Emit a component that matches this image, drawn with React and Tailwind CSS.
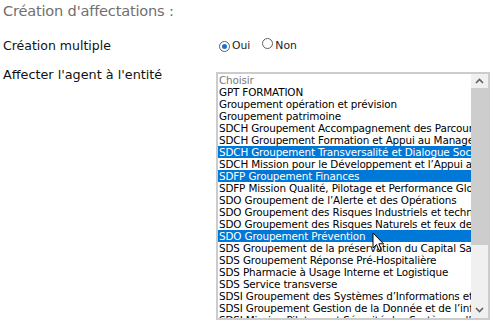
import React from "react";

const items = [
  { t: "Choisir", muted: true },
  { t: "GPT FORMATION" },
  { t: "Groupement opération et prévision" },
  { t: "Groupement patrimoine" },
  { t: "SDCH Groupement Accompagnement des Parcours Professionnels" },
  { t: "SDCH Groupement Formation et Appui au Management" },
  { t: "SDCH Groupement Transversalité et Dialogue Social", sel: true },
  { t: "SDCH Mission pour le Développement et l’Appui aux Compétences" },
  { t: "SDFP Groupement Finances", sel: true },
  { t: "SDFP Mission Qualité, Pilotage et Performance Globale" },
  { t: "SDO Groupement de l’Alerte et des Opérations" },
  { t: "SDO Groupement des Risques Industriels et technologiques" },
  { t: "SDO Groupement des Risques Naturels et feux de forêts" },
  { t: "SDO Groupement Prévention", sel: true },
  { t: "SDS Groupement de la préservation du Capital Santé" },
  { t: "SDS Groupement Réponse Pré-Hospitalière" },
  { t: "SDS Pharmacie à Usage Interne et Logistique" },
  { t: "SDS Service transverse" },
  { t: "SDSI Groupement des Systèmes d’Informations et de Communication" },
  { t: "SDSI Groupement Gestion de la Donnée et de l’information" },
  { t: "SDSI Mission Pilotage et Sécurité des Systèmes d’Information" },
];

function Radio({ checked }) {
  return (
    <span className="inline-flex w-[11px] h-[11px] rounded-full border border-[#5f5f5f] items-center justify-center bg-white box-border">
      {checked && <span className="w-[5px] h-[5px] rounded-full bg-[#1a6fd1]" />}
    </span>
  );
}

export default function App() {
  return (
    <div
      className="w-[502px] h-[331px] bg-white overflow-hidden relative text-[#1f1f1f]"
      style={{ fontFamily: "'DejaVu Sans', Verdana, sans-serif" }}
    >
      <div className="pl-[3px] pt-[2px] text-[14.6px] leading-[18px] text-[#707070] tracking-[-0.2px]">
        Création d'affectations :
      </div>

      <div className="flex mt-[19px] h-[14px] items-center">
        <div className="w-[217px] pl-[3px] text-[12.5px] leading-[14px] text-[#111]">Création multiple</div>
        <div className="flex items-center text-[10.8px] text-[#222] pl-[2px]">
          <Radio checked />
          <span className="ml-[2px]">Oui</span>
          <span className="ml-[12px]"><Radio /></span>
          <span className="ml-[2px]">Non</span>
        </div>
      </div>

      <div className="flex mt-[15px]">
        <div className="w-[216px] pl-[3px] pt-[0px] text-[12.8px] leading-[14px] text-[#111]">
          Affecter l'agent à l'entité
        </div>
        <div className="mt-[4px] w-[274px] h-[248px] border-2 border-[#cccccc] flex overflow-hidden bg-white">
          <div className="flex-1 min-w-0 overflow-hidden">
            {items.map((it, i) => (
              <div
                key={i}
                className={
                  "h-[12px] leading-[12px] pl-[1px] text-[10.4px] whitespace-nowrap overflow-hidden tracking-[-0.15px] " +
                  (it.sel
                    ? "bg-[#0078d7] text-white"
                    : it.muted
                    ? "text-[#7a7a7a]"
                    : "text-black")
                }
              >
                {it.t}
              </div>
            ))}
          </div>
          <div className="w-[17px] flex flex-col bg-[#f0f0f0]">
            <div className="h-[14px] flex items-center justify-center">
              <svg width="9" height="6" viewBox="0 0 9 6">
                <path d="M1 5 L4.5 1.5 L8 5" stroke="#606060" strokeWidth="1.6" fill="none" />
              </svg>
            </div>
            <div className="h-[157px] bg-[#cdcdcd]" />
            <div className="flex-1" />
            <div className="h-[16px] flex items-center justify-center">
              <svg width="9" height="6" viewBox="0 0 9 6">
                <path d="M1 1 L4.5 4.5 L8 1" stroke="#606060" strokeWidth="1.6" fill="none" />
              </svg>
            </div>
          </div>
        </div>
      </div>

      <svg
        className="absolute left-[372px] top-[232px]"
        width="13"
        height="20"
        viewBox="0 0 13 20"
      >
        <path
          d="M1 1 L1 16 L4.5 12.5 L7 18.5 L9.2 17.5 L6.8 11.8 L11.5 11.8 Z"
          fill="white"
          stroke="black"
          strokeWidth="1"
          strokeLinejoin="round"
        />
      </svg>
    </div>
  );
}
